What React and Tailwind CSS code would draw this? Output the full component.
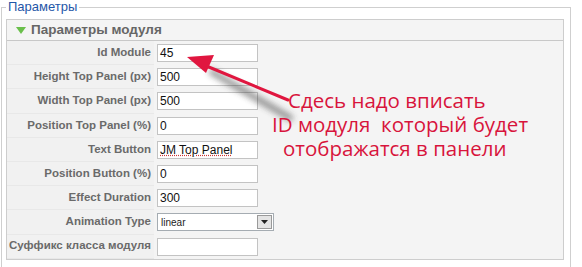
import React from 'react';

const rows = [
  { label: 'Id Module', value: '45' },
  { label: 'Height Top Panel (px)', value: '500' },
  { label: 'Width Top Panel (px)', value: '500' },
  { label: 'Position Top Panel (%)', value: '0' },
  { label: 'Text Button', value: 'JM Top Panel', dotted: true },
  { label: 'Position Button (%)', value: '0' },
  { label: 'Effect Duration', value: '300' },
  { label: 'Animation Type', value: 'linear', select: true },
  { label: 'Суффикс класса модуля', value: '' },
];

function Field({ row }) {
  if (row.select) {
    return (
      <div className="flex h-[18px] w-[117px] items-center border border-[#a5acb2] bg-white">
        <span className="flex-1 pl-[3px] text-[10px] text-[#222]">{row.value}</span>
        <span className="m-[1px] flex h-[14px] w-[15px] items-center justify-center border border-[#9a9a9a] bg-[#e4e4e4]">
          <svg width="7" height="4" viewBox="0 0 7 4">
            <path d="M0 0h7L3.5 4z" fill="#222" />
          </svg>
        </span>
      </div>
    );
  }
  return (
    <div className="flex h-[18px] w-[101px] items-center border border-[#c3c3c3] bg-white pl-[2px] text-[12px] text-[#111]">
      <span className={row.dotted ? 'underline decoration-dotted decoration-[#c33]' : ''}>{row.value}</span>
    </div>
  );
}

export default function App() {
  return (
    <div className="relative h-[267px] w-[582px] overflow-hidden bg-white font-['Liberation_Sans',Arial,sans-serif]">
      <div className="absolute left-[1px] top-[7px] h-[300px] w-[570px] border border-[#cfcfcf]" />
      <div className="relative px-[6px]">
        <div className="w-fit bg-white px-[2px] text-[13px] leading-[14px] text-[#1f57a8]">Параметры</div>
        <div className="mt-[5px] w-[558px] border border-[#cdcdcd] bg-[#f4f4f4]">
          <div className="flex h-[21px] items-center gap-[5px] border-b border-[#c8c8c8] pl-[9px] text-[13.5px] font-bold text-[#666]">
            <svg width="10" height="7" viewBox="0 0 10 7">
              <path d="M0 0h10L5 7z" fill="#6abf4b" />
            </svg>
            <span>Параметры модуля</span>
          </div>
          {rows.map((row) => (
            <div key={row.label} className="flex h-[24.2px] items-center">
              <div className="flex h-full w-[147px] items-center justify-end border-b border-[#e8e8e8] bg-[#f1f1f1] pr-[3px] text-[11.5px] font-bold text-[#6a6a6a]">
                {row.label}
              </div>
              <div className="pl-[3px]">
                <Field row={row} />
              </div>
            </div>
          ))}
        </div>
      </div>

      <svg className="absolute left-0 top-0" width="582" height="267" viewBox="0 0 582 267">
        <defs>
          <filter id="blur" x="-20%" y="-20%" width="140%" height="140%">
            <feGaussianBlur stdDeviation="3" />
          </filter>
        </defs>
        <path d="M212 72 L290 118" stroke="#333" strokeWidth="6" strokeLinecap="round" opacity="0.55" filter="url(#blur)" />
        <path d="M288 100 L204 65" stroke="#e0163f" strokeWidth="3" strokeLinecap="round" />
        <path d="M187 57 L214 55 L206 73 Z" fill="#e0163f" />
      </svg>

      <div className="absolute left-[272px] top-[88px] font-['Open_Sans',sans-serif] text-[20.5px] leading-[24px] text-[#d8143c]">
        <div className="ml-[16px]">Сдесь надо вписать</div>
        <div>ID модуля&nbsp; который будет</div>
        <div className="ml-[11px]">отображатся в панели</div>
      </div>
    </div>
  );
}
